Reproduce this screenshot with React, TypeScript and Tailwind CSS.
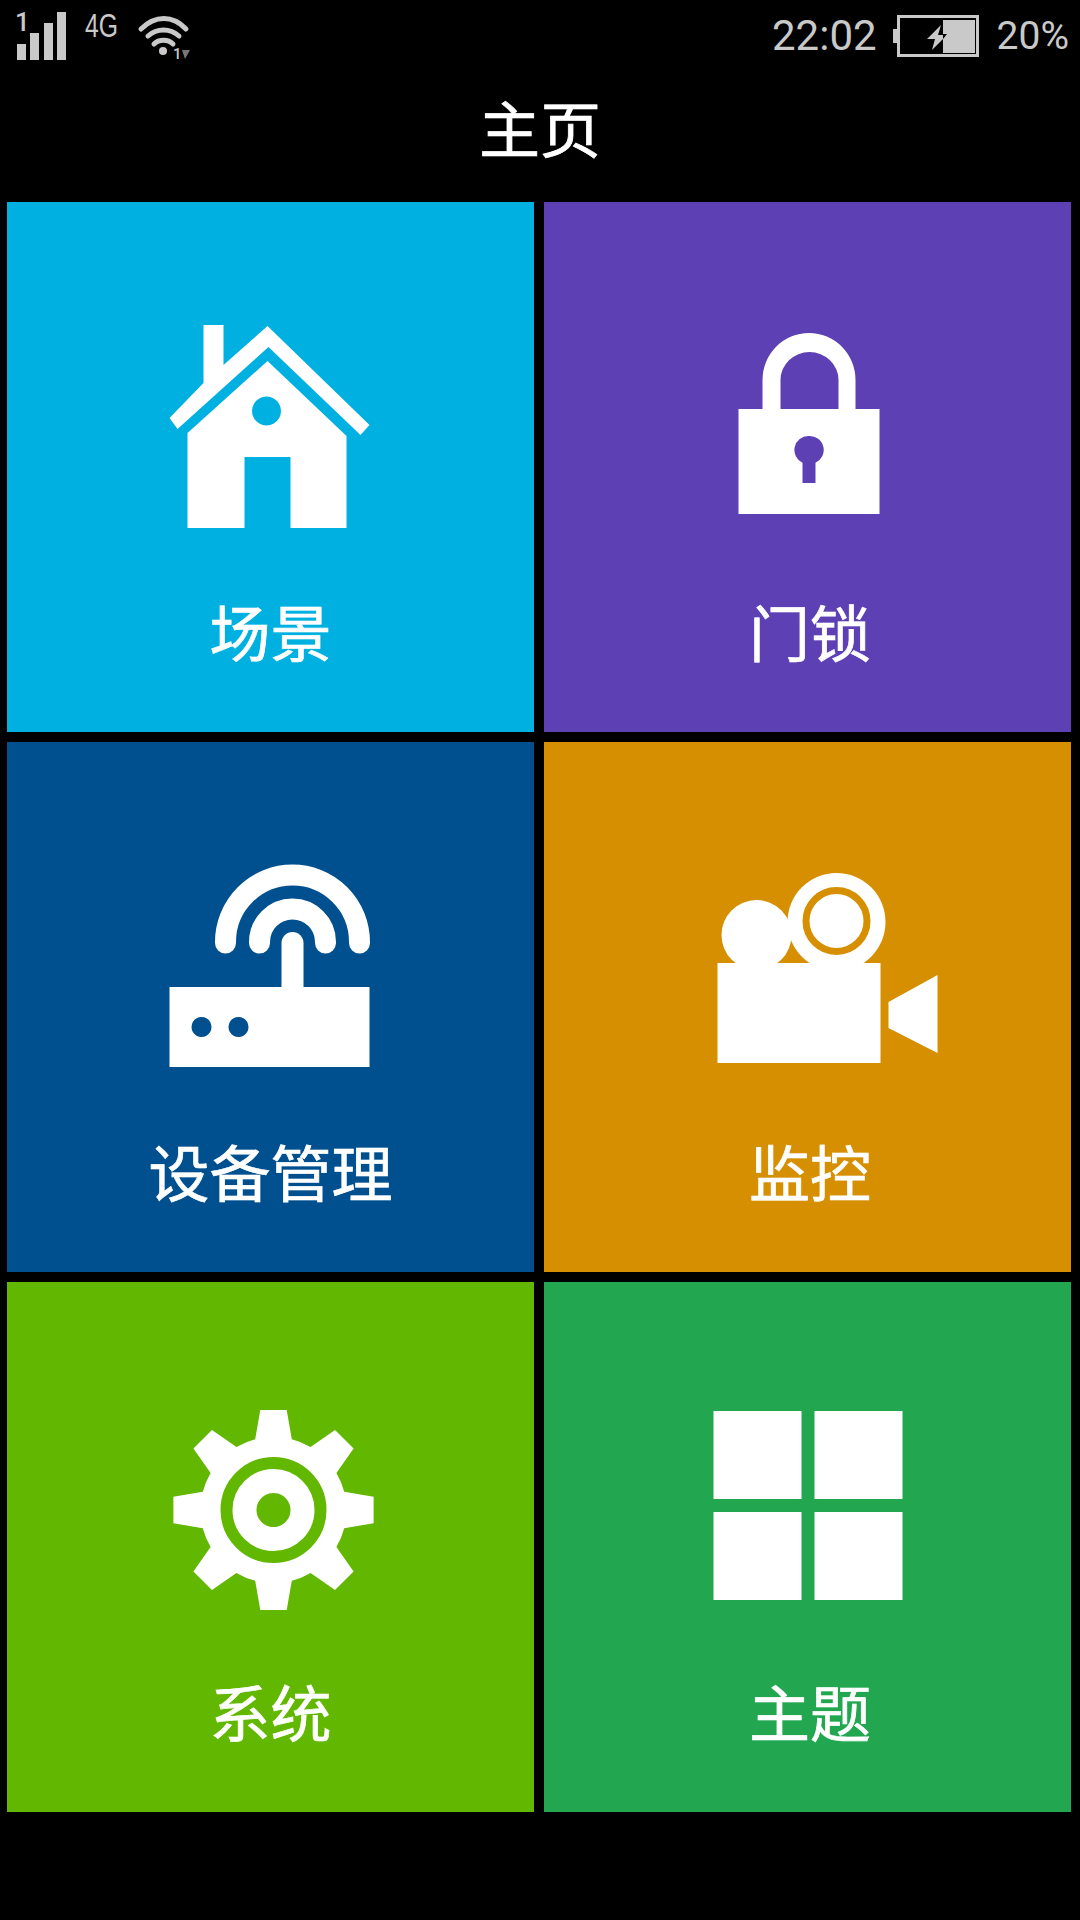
const tip = 101;
const base = 73;

// eight teeth round (273, 1510)
function gearPath() {
  const pt = (deg: number, r: number) => {
    const a = ((deg - 90) * Math.PI) / 180;
    return `${(273 + r * Math.cos(a)).toFixed(1)} ${(1510 + r * Math.sin(a)).toFixed(1)}`;
  };
  let d = "";
  for (let k = 0; k < 8; k++) {
    const c = k * 45;
    d += `${k === 0 ? "M" : "A73 73 0 0 1"} ${pt(c - 14.5, base)} `;
    d += `L${pt(c - 7.5, tip)} L${pt(c + 7.5, tip)} L${pt(c + 14.5, base)} `;
  }
  return d + `A73 73 0 0 1 ${pt(-14.5, base)} Z`;
}

function Tile({ color, label, view, right, children }: { color: string; label: string; view: string; right?: boolean; children: React.ReactNode }) {
  return (
    <div className={`flex flex-col items-center pt-[113px] ${color}`}>
      <svg width="260" height="220" viewBox={view} className="shrink-0">
        {children}
      </svg>
      <div className={`mt-[56px] text-[61px] leading-[80px] text-white [-webkit-text-stroke:0.7px_#fff] ${right ? "ml-[5px]" : ""}`}>{label}</div>
    </div>
  );
}

function SignalIcon() {
  return (
    <svg width="60" height="58" viewBox="14 4 60 58" fill="#c9c9c9">
      <text x="15" y="31" fontSize="26" fontWeight="500" fontFamily="Roboto, sans-serif">1</text>
      <rect x="17" y="44" width="9" height="16" />
      <rect x="30" y="33" width="9" height="27" />
      <rect x="44" y="23" width="9" height="37" />
      <rect x="57" y="12" width="9" height="48" />
    </svg>
  );
}

function WifiIcon() {
  return (
    <svg width="56" height="52" viewBox="136 10 56 52">
      <g fill="none" stroke="#c9c9c9" strokeWidth="5" strokeLinecap="round">
        <path d="M141 29 C155 15 173 15 186 29" />
        <path d="M148 36 C157 28 170 28 179 36" />
        <path d="M154 44 C159 39 168 39 173 44" />
      </g>
      <circle cx="163" cy="51" r="4" fill="#c9c9c9" />
      <text x="173" y="59" fontSize="15" fontWeight="500" fill="#c9c9c9" fontFamily="Roboto, sans-serif">1</text>
      <path d="M182 50 H190 L185 59 Z" fill="#777777" />
    </svg>
  );
}

function BatteryIcon() {
  return (
    <svg width="90" height="46" viewBox="892 13 90 46">
      <rect x="893" y="29" width="4" height="14" fill="#c9c9c9" />
      <rect x="898.5" y="16.5" width="79" height="39" fill="none" stroke="#c9c9c9" strokeWidth="3" />
      <rect x="943" y="20" width="32" height="33" fill="#c9c9c9" />
      <path d="M941 25 L927 39 H935 L932 50 L947 35 H938 Z" fill="#c9c9c9" />
      <path d="M943 34 H947 L943 39 Z" fill="#000000" />
    </svg>
  );
}

export default function App() {
  return (
    <div className="w-[1080px] h-[1920px] bg-black overflow-hidden font-['Noto_Sans_CJK_SC','Noto_Sans',sans-serif]">
      {/* status bar */}
      <div className="h-[62px] flex items-start justify-between text-[#c9c9c9] font-['Roboto',sans-serif]">
        <div className="flex items-start pt-[4px] pl-[14px]">
          <SignalIcon />
          <span className="ml-[11px] mt-[5px] text-[33px] leading-[34px] font-normal font-['Liberation_Sans',sans-serif] scale-x-75 origin-left">4G</span>
          <div className="ml-[7px] mt-[6px]">
            <WifiIcon />
          </div>
        </div>
        <div className="flex items-center pt-[13px] pr-[11px]">
          <span className="text-[42px] leading-[46px] font-normal">22:02</span>
          <div className="ml-[15px]">
            <BatteryIcon />
          </div>
          <span className="ml-[15px] text-[39px] leading-[46px] font-normal">20%</span>
        </div>
      </div>

      {/* title */}
      <div className="h-[140px] pb-[10px] flex items-center justify-center text-[61px] text-white [-webkit-text-stroke:0.7px_#fff]">主页</div>

      <div className="grid grid-cols-[527px_527px] grid-rows-[530px_530px_530px] gap-[10px] pl-[7px]">
        <Tile color="bg-[#00b0e0]" label="场景" view="140.5 315 260 220">
          <path d="M203 325 H223 V365 L267 326 L369 425 L360 435 L268 347 L177 429 L169 418 L203 383 Z" fill="#fff" />
          <path fillRule="evenodd" d="M267 361 L346 436 V528 H290 V457 H244 V528 H187 V433 Z M266 396.5 a14.5 14.5 0 1 0 0.01 0 Z" fill="#fff" />
        </Tile>
        <Tile color="bg-[#5e40b5]" label="门锁" view="677.5 315 260 220" right>
          <path d="M762 412 V380 a46.5 47 0 0 1 93 0 V412 H838 V380 a29 28 0 0 0 -58 0 V412 Z" fill="#fff" />
          <path fillRule="evenodd" d="M738 409 H879 V514 H738 Z M808 436 a14 14 0 0 0 -6 26.7 V483 H815 V462.7 a14 14 0 0 0 -7 -26.7 Z" fill="#fff" />
        </Tile>
        <Tile color="bg-[#005090]" label="设备管理" view="140.5 855 260 220">
          <g fill="none" stroke="#fff" strokeWidth="21" strokeLinecap="round">
            <path d="M225 943 V942 a67 67 0 0 1 134 0 V943" />
            <path d="M259 943 V942 a33 33 0 0 1 66 0 V943" />
            <path d="M292 943 V990" strokeWidth="22" />
          </g>
          <path fillRule="evenodd" d="M169 987 H369 V1067 H169 Z M201 1017 a10 10 0 1 0 0.01 0 Z M238 1017 a10 10 0 1 0 0.01 0 Z" fill="#fff" />
        </Tile>
        <Tile color="bg-[#d68f00]" label="监控" view="677.5 855 260 220" right>
          <circle cx="756" cy="935" r="35" fill="#fff" />
          <circle cx="836" cy="922" r="49" fill="#fff" />
          <circle cx="836" cy="921" r="30.5" fill="none" stroke="#d68f00" strokeWidth="7" />
          <rect x="717" y="963" width="163" height="100" fill="#fff" />
          <path d="M888 1002 L937 975 V1053 L888 1028 Z" fill="#fff" />
        </Tile>
        <Tile color="bg-[#62b700]" label="系统" view="140.5 1395 260 220">
          <path fillRule="evenodd" d={`${gearPath()} M273 1493 a17 17 0 1 0 0.01 0 Z`} fill="#fff" />
          <circle cx="273" cy="1510" r="47" fill="none" stroke="#62b700" strokeWidth="12" />
        </Tile>
        <Tile color="bg-[#22a650]" label="主题" view="677.5 1395 260 220" right>
          <rect x="713" y="1411" width="88" height="88" fill="#fff" />
          <rect x="814" y="1411" width="88" height="88" fill="#fff" />
          <rect x="713" y="1512" width="88" height="88" fill="#fff" />
          <rect x="814" y="1512" width="88" height="88" fill="#fff" />
        </Tile>
      </div>
    </div>
  );
}
